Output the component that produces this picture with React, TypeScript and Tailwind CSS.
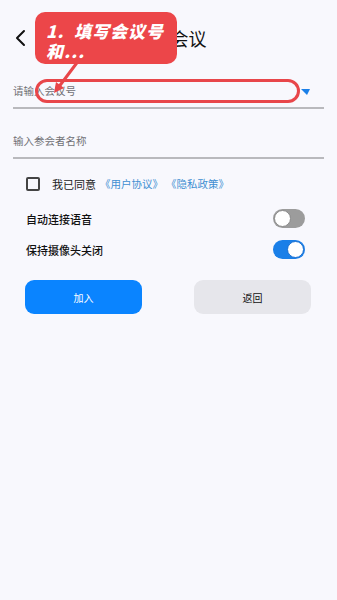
import React from "react";

function Toggle({ on }: { on: boolean }) {
  return on ? (
    <div className="w-[32px] h-[19px] rounded-full bg-[#1a7fe8] flex items-center justify-end pr-[1px]">
      <div className="w-[17px] h-[17px] rounded-full bg-white border border-[#1a6fd0]" />
    </div>
  ) : (
    <div className="w-[32px] h-[19px] rounded-full bg-[#9c9c9c] flex items-center justify-start pl-[1px]">
      <div className="w-[17px] h-[17px] rounded-full bg-white border border-[#8a8a8a]" />
    </div>
  );
}

export default function App() {
  return (
    <div
      className="relative w-full min-h-[600px] bg-[#f8f8fd] text-[#222]"
      style={{ fontFamily: '"Noto Sans CJK SC", "Noto Sans", sans-serif' }}
    >
      {/* header */}
      <div className="relative h-[76px] flex items-center justify-center">
        <svg className="absolute left-[14px] top-[29px]" width="14" height="18" viewBox="0 0 14 18">
          <path d="M10 2 L3 9 L10 16" fill="none" stroke="#111" strokeWidth="2" strokeLinecap="round" strokeLinejoin="round" />
        </svg>
        <div className="text-[18px] leading-[22px] text-[#111] pl-[4px]">加入会议</div>
      </div>

      {/* field 1 */}
      <div className="mx-[13px] border-b-2 border-[#b9b9bd] pt-[8px] pb-[9px] flex items-center justify-between pr-[14px]">
        <div className="text-[10.5px] leading-[14px] text-[#707075]">请输入会议号</div>
        <svg width="9" height="6" viewBox="0 0 9 6" className="mt-[2px]">
          <path d="M0 0 L9 0 L6 6 Z" fill="#1a7fe8" />
        </svg>
      </div>

      {/* field 2 */}
      <div className="mx-[13px] border-b-2 border-[#b9b9bd] pt-[25px] pb-[9px]">
        <div className="text-[10.5px] leading-[14px] text-[#707075]">输入参会者名称</div>
      </div>

      {/* agreement */}
      <div className="mt-[18px] pl-[26px] flex items-center h-[14px]">
        <div className="w-[14px] h-[14px] border-2 border-[#444] rounded-[2px]" />
        <div className="ml-[12px] text-[11px] leading-[14px] flex items-center">
          <span className="text-[#222] mr-[4px]">我已同意</span>
          <span className="text-[#3f8fd2] text-[10.5px]">《用户协议》</span>
          <span className="text-[#3f8fd2] text-[10.5px] ml-[3px]">《隐私政策》</span>
        </div>
      </div>

      {/* toggles */}
      <div className="mt-[18px] pl-[26px] pr-[32px] flex items-center justify-between h-[19px]">
        <div className="text-[11px] leading-[14px] font-medium text-[#111]">自动连接语音</div>
        <Toggle on={false} />
      </div>
      <div className="mt-[12px] pl-[26px] pr-[32px] flex items-center justify-between h-[19px]">
        <div className="text-[11px] leading-[14px] font-medium text-[#111]">保持摄像头关闭</div>
        <Toggle on={true} />
      </div>

      {/* buttons */}
      <div className="mt-[21px] pl-[25px] pr-[26px] flex justify-between">
        <div className="w-[117px] h-[34px] rounded-[9px] bg-[#0a84ff] text-white text-[10px] flex items-center justify-center">
          加入
        </div>
        <div className="w-[117px] h-[34px] rounded-[9px] bg-[#e6e6eb] text-[#111] text-[10px] flex items-center justify-center">
          返回
        </div>
      </div>

      {/* annotation overlays */}
      <div className="absolute left-[35px] top-[79px] w-[265px] h-[24px] border-[3px] border-[#e8464a] rounded-[12px]" />
      <svg className="absolute left-[50px] top-[58px]" width="36" height="38" viewBox="0 0 36 38">
        <path d="M29 2 L8 30" stroke="#e8464a" strokeWidth="3" strokeLinecap="round" />
        <path d="M4 35 L6 24 L14 30 Z" fill="#e8464a" />
      </svg>
      <div className="absolute left-[35px] top-[12px] w-[142px] h-[52px] rounded-[10px] bg-[#ec4649] px-[11px] pt-[9px]">
        <div className="text-white text-[17px] leading-[20px] font-black italic whitespace-pre tracking-[1px]">{"1.  填写会议号"}</div>
        <div className="text-white text-[17px] leading-[20px] font-black italic tracking-[1px]">和...</div>
      </div>
    </div>
  );
}
